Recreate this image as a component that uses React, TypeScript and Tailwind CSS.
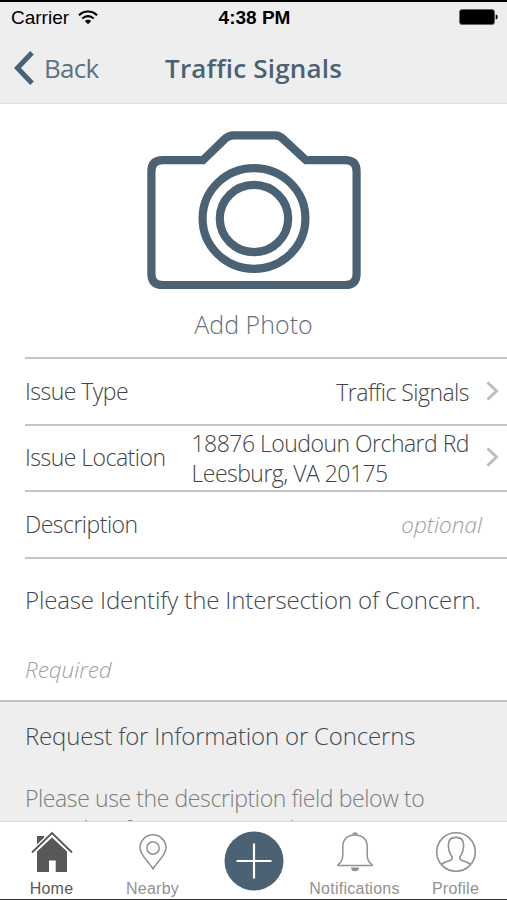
import type { ReactNode } from "react";

function StatusBar() {
  return (
    <div className="grid h-[32px] grid-cols-3 items-center border-t-2 border-black pr-[9px] pl-[11px] font-['Liberation_Sans',sans-serif] text-black">
      <div className="flex items-center gap-[9px]">
        <span className="mt-[2px] text-[19px] leading-7">Carrier</span>
        <svg width="20" height="15" viewBox="0 0 20 15" fill="none" stroke="#000" strokeWidth="2.2">
          <path d="M1 5.2a12.8 12.8 0 0 1 18 0" />
          <path d="M4.3 8.5a8.2 8.2 0 0 1 11.4 0" />
          <path d="M10 14.3 6.8 11.1a4.6 4.6 0 0 1 6.4 0Z" fill="#000" stroke="none" />
        </svg>
      </div>
      <span className="mt-[2px] text-center text-[19px] leading-7 font-bold whitespace-nowrap">4:38 PM</span>
      <svg className="justify-self-end" width="39" height="16" viewBox="0 0 39 16">
        <rect x="0.5" y="0.5" width="35" height="15" rx="2.5" fill="#000" stroke="#666" />
        <path d="M36.7 5.2q2 .8 2 2.8t-2 2.8z" fill="#000" />
      </svg>
    </div>
  );
}

function NavBar() {
  return (
    <div className="flex h-[71px] items-center pl-[14px] text-[#4a6274]">
      <svg width="21" height="34" viewBox="0 0 21 34" fill="none" stroke="currentColor" strokeWidth="5">
        <path d="M18 1.8 3.5 17 18 32.2" />
      </svg>
      <span className="ml-[9px] w-[121px] text-[26px] leading-9 tracking-[-0.7px] text-[#5d7282]">Back</span>
      <h1 className="text-[26px] leading-9 font-semibold tracking-[0.2px] whitespace-nowrap">Traffic Signals</h1>
    </div>
  );
}

function AddPhoto() {
  return (
    <button type="button" className="flex h-[253px] w-full flex-col items-center pt-[26px]">
      <svg
        width="214"
        height="160"
        viewBox="147 130 214 160"
        fill="none"
        stroke="#4a6274"
        strokeWidth="8.2"
      >
        <path d="M163 160.2H203L224 139.8Q228 135.4 234 135.4H275Q280 135.4 284 139.8L306 160.2H345Q356.6 160.2 356.6 171.5V273.7Q356.6 285 345 285H163Q151.4 285 151.4 273.7V171.5Q151.4 160.2 163 160.2Z" />
        <ellipse cx="254" cy="218.5" rx="51.4" ry="50.3" />
        <ellipse cx="254" cy="218.5" rx="34.2" ry="33.6" />
      </svg>
      <span className="mt-[16px] text-[25px] leading-9 font-light text-[#64707d]">Add Photo</span>
    </button>
  );
}

function Chevron() {
  return (
    <svg width="13" height="20" viewBox="0 0 13 20" fill="none" stroke="#bdbdbd" strokeWidth="3">
      <path d="M1.5 1.5 10.5 10l-9 8.5" />
    </svg>
  );
}

function Row({ label, children }: { label: string; children: ReactNode }) {
  return (
    <div className="ml-[25px] flex h-[66.5px] items-center border-t-2 border-[#c6c6c6] pb-px text-[23px] tracking-[-0.52px]">
      <span className="leading-8 font-light whitespace-nowrap">{label}</span>
      {children}
    </div>
  );
}

function HomeIcon() {
  return (
    <svg width="42" height="42" viewBox="0 0 42 42">
      <path d="M6 5H13V9.5L6 16Z" fill="#5a5856" />
      <path d="M6 20.5 21 6.5 36 20.5V41H24.7V29.5H18V41H6Z" fill="#5a5856" />
      <path d="M1 21.5 21 2 41 21.5" fill="none" stroke="#fff" strokeWidth="4.5" />
      <path d="M1 21.5 21 2 41 21.5" fill="none" stroke="#5a5856" strokeWidth="1.8" />
    </svg>
  );
}

function PinIcon() {
  return (
    <svg width="28" height="36" viewBox="0 0 28 36" fill="none" stroke="#929292" strokeWidth="1.5">
      <path d="M14 35C11 29 1 21.5 1 13.8a13 13 0 0 1 26 0C27 21.5 17 29 14 35Z" />
      <circle cx="14" cy="14" r="6.2" />
    </svg>
  );
}

function BellIcon() {
  return (
    <svg width="36" height="40" viewBox="0 0 36 40" fill="none" stroke="#929292" strokeWidth="1.5">
      <path d="M1 33.6V32.6C5 30 5.8 27.5 5.8 23V14.5C5.8 7 11 2.9 18 2.9S30.2 7 30.2 14.5V23C30.2 27.5 31 30 35 32.6V33.6Z" />
      <path d="M15.3 2.6a2.7 2.3 0 0 1 5.4 0ZM14 35.6h8a4 3.6 0 0 1-8 0Z" fill="#929292" stroke="none" />
    </svg>
  );
}

function ProfileIcon() {
  return (
    <svg width="42" height="42" viewBox="0 0 42 42" fill="none" stroke="#929292" strokeWidth="1.6">
      <circle cx="21" cy="21" r="19.3" />
      <path d="M6.5 33.5C9 31 13 30.5 15.5 29.3 17.5 28.4 17.5 26.2 16.3 24.4 14 21.5 13.4 18 13.4 14 13.4 9 16 6.4 21 6.4S28.6 9 28.6 14C28.6 18 28 21.5 25.7 24.4 24.5 26.2 24.5 28.4 26.5 29.3 29 30.5 33 31 35.5 33.5" />
    </svg>
  );
}

function Tab({ label, active, children }: { label: string; active?: boolean; children: ReactNode }) {
  return (
    <div
      className={`flex w-[101px] flex-col items-center text-[16px] leading-5 tracking-[0.25px] whitespace-nowrap ${
        active ? "text-[#5a5856]" : "text-[#929292]"
      }`}
    >
      <div className="mb-[4px] flex h-[46px] items-center">{children}</div>
      <span>{label}</span>
    </div>
  );
}

function TabBar() {
  return (
    <nav className="flex h-[79px] shrink-0 border-t border-b border-t-[#dcdcdc] border-b-[#333] bg-white pt-[7px] pl-px font-['Liberation_Sans',sans-serif]">
      <Tab label="Home" active>
        <HomeIcon />
      </Tab>
      <Tab label="Nearby">
        <PinIcon />
      </Tab>
      <div className="flex w-[101px] justify-center pt-[2px]">
        <svg width="60" height="60" viewBox="0 0 60 60">
          <circle cx="30" cy="30" r="29.5" fill="#4a6274" />
          <path d="M12.5 30h35M30 12.5v35" stroke="#fff" strokeWidth="2.2" />
        </svg>
      </div>
      <Tab label="Notifications">
        <BellIcon />
      </Tab>
      <Tab label="Profile">
        <ProfileIcon />
      </Tab>
    </nav>
  );
}

export default function App() {
  return (
    <div className="flex h-[900px] w-[507px] flex-col overflow-hidden bg-white font-['Open_Sans',sans-serif] text-[#444]">
      <header className="h-[104px] shrink-0 border-b border-[#dfdfdf] bg-[#eeeeee]">
        <StatusBar />
        <NavBar />
      </header>
      <main className="min-h-0 flex-1 overflow-hidden">
        <AddPhoto />
        <Row label="Issue Type">
          <span className="mt-[2px] mr-[17px] ml-auto leading-8 font-light">Traffic Signals</span>
          <div className="mr-[8px]">
            <Chevron />
          </div>
        </Row>
        <Row label="Issue Location">
          <span className="mt-[2px] mr-[17px] ml-auto leading-[30px] font-light whitespace-nowrap">
            18876 Loudoun Orchard Rd
            <br />
            Leesburg, VA 20175
          </span>
          <div className="mr-[8px]">
            <Chevron />
          </div>
        </Row>
        <Row label="Description">
          <span className="mt-[2px] mr-[25px] ml-auto text-[22.5px] font-light tracking-normal text-[#a0a0a0] italic">
            optional
          </span>
        </Row>
        <section className="ml-[25px] h-[143.5px] border-t-2 border-[#c6c6c6] pt-[23px]">
          <h2 className="text-[24px] leading-9 font-light tracking-[-0.14px] whitespace-nowrap text-[#424954]">
            Please Identify the Intersection of Concern.
          </h2>
          <p className="mt-[36px] text-[22.4px] leading-8 font-light text-[#a0a0a0] italic">Required</p>
        </section>
        <section className="h-[130px] border-t-2 border-[#c0c0c0] bg-[#eeeeee] pt-[16px] pl-[25px] font-light">
          <h2 className="text-[24px] leading-9 tracking-[-0.17px] text-[#424954]">
            Request for Information or Concerns
          </h2>
          <p className="mt-[29px] w-[430px] text-[23px] leading-[31px] tracking-[-0.4px] text-[#7c7c7c]">
            Please use the description field below to
            <br />
            provide information regarding
          </p>
        </section>
      </main>
      <TabBar />
    </div>
  );
}
